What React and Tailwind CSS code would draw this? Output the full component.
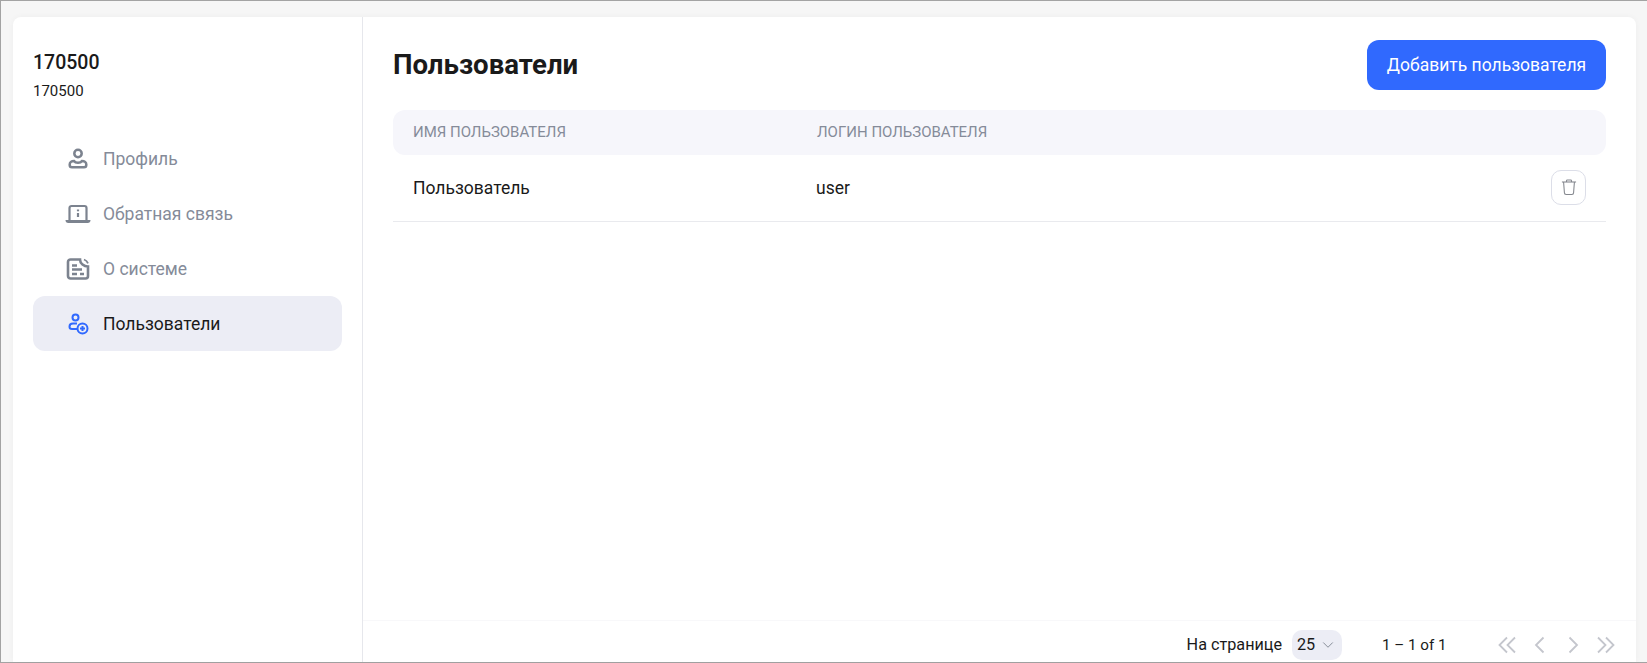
import { ChevronDown } from "lucide-react";

function ProfileIcon() {
  return (
    <svg viewBox="0 0 24 24" className="w-6 h-6" fill="none" stroke="currentColor" strokeWidth="2.500">
      <circle cx="12" cy="6.500" r="3.700" />
      <path d="M8 14c-2.500 0-4.300 1.500-4.300 3.500v.4c0 1.400 1 2.300 2.300 2.300h12c1.300 0 2.300-.9 2.300-2.300v-.4c0-2-1.800-3.500-4.300-3.500-.8 1.200-2.200 1.800-4 1.800s-3.200-.6-4-1.800z" />
    </svg>
  );
}

function LaptopIcon() {
  return (
    <svg viewBox="0 0 24 24" className="w-6 h-6 overflow-visible" fill="none" stroke="currentColor" strokeWidth="2.200">
      <path d="M3.500 18V6A2 2 0 0 1 5.500 4h13a2 2 0 0 1 2 2v12" />
      <path d="M-.5 18h25c0 1.700-1 3-2.800 3H2.300C.5 21-.5 19.700-.5 18z" fill="currentColor" stroke="none" />
      <path d="M12 11v4" />
      <path d="M12 7.500v1.800" />
    </svg>
  );
}

function DocIcon() {
  return (
    <svg viewBox="0 0 24 24" className="w-6 h-6" fill="none" stroke="currentColor" strokeWidth="2.600">
      <path d="M14 2.500H4.500a2.500 2.500 0 0 0-2.500 2.500v14a2.500 2.500 0 0 0 2.500 2.500h15a2.500 2.500 0 0 0 2.500-2.500V9.500c-4 0-8-3-8-7z" />
      <path d="M18 2.500c1.800.6 3.300 2 4 3.800" strokeWidth="1.800" />
      <path d="M6 8.500h5M6 12.500h10M6 17h5M14 17h4" strokeWidth="2.300" />
    </svg>
  );
}

function UsersAddIcon() {
  return (
    <svg viewBox="0 0 24 24" className="w-6 h-6" fill="none" stroke="currentColor" strokeWidth="2">
      <circle cx="9.500" cy="5.500" r="3" />
      <path d="M11 11.500H7c-2 0-3.500 1.300-3.500 3.200 0 1.500 1 2.300 2.500 2.300h5" />
      <circle cx="16.500" cy="16.500" r="5" />
      <path d="M16.500 14v5M14 16.500h5" />
    </svg>
  );
}

function TrashIcon() {
  return (
    <svg viewBox="0 0 24 24" className="w-5 h-5" fill="none" stroke="currentColor" strokeWidth="1.300">
      <path d="M3.500 6h17" />
      <path d="M9 6V4.500a1 1 0 0 1 1-1h4a1 1 0 0 1 1 1V6" />
      <path d="M5.500 6l1 13a2 2 0 0 0 2 2h7a2 2 0 0 0 2-2l1-13" />
    </svg>
  );
}

function PageArrow({ d }) {
  return (
    <svg viewBox="0 0 24 24" className="w-6 h-6 text-[#c4c6cd]" fill="none" stroke="currentColor" strokeWidth="1.800">
      <path d={d} />
    </svg>
  );
}

const menu = [
  { label: "Профиль", icon: ProfileIcon },
  { label: "Обратная связь", icon: LaptopIcon },
  { label: "О системе", icon: DocIcon },
  { label: "Пользователи", icon: UsersAddIcon, active: true },
];

function Sidebar() {
  return (
    <aside className="w-[350px] shrink-0 border-r border-[#e6e7ec] px-[20px] pt-[34px]">
      <div className="text-[19.500px] leading-[24px] font-medium text-[#1a1a1a]">170500</div>
      <div className="mt-[6px] text-[15px] leading-[20px] text-[#1a1a1a]">170500</div>
      <nav className="mt-[30px] flex flex-col">
        {menu.map((item) => {
          const Icon = item.icon;
          return (
            <div
              key={item.label}
              className={`h-[55px] flex items-center pl-[33px] gap-[13px] rounded-[12px] text-[17.500px] ${
                item.active ? "bg-[#ecedf5] text-[#1a1a1a]" : "text-[#858b99]"
              }`}
            >
              <span className={item.active ? "text-[#3069fe]" : "text-[#7c838f]"}>
                <Icon />
              </span>
              <span className="pt-[2px]">{item.label}</span>
            </div>
          );
        })}
      </nav>
    </aside>
  );
}

function UsersTable() {
  return (
    <div className="mt-[20px]">
      <div className="h-[45px] flex items-center rounded-[12px] bg-[#f6f6fb] px-[20px] text-[15px] text-[#858b99] uppercase">
        <div className="w-[404px]">Имя пользователя</div>
        <div>Логин пользователя</div>
      </div>
      <div className="h-[67px] flex items-center border-b border-[#e9eaee] px-[20px] text-[17.500px] text-[#1a1a1a]">
        <div className="w-[403px]">Пользователь</div>
        <div className="flex-1">user</div>
        <button className="mb-[2px] w-[35px] h-[35px] flex items-center justify-center rounded-[10px] border border-[#dcdee8] text-[#85888f]">
          <TrashIcon />
        </button>
      </div>
    </div>
  );
}

function Pagination() {
  return (
    <div className="h-[42px] shrink-0 flex items-start justify-end border-t border-[#f8f8fa] pt-[9px] pr-[18px] text-[16.200px] leading-[30px] text-[#1a1a1a]">
      <span className="whitespace-nowrap">На странице</span>
      <div className="ml-[10px] h-[30px] w-[50px] flex items-center justify-center gap-[4px] rounded-[10px] bg-[#ecedf5]">
        25
        <ChevronDown className="w-[18px] h-[18px] text-[#7c838f]" strokeWidth={1.200} />
      </div>
      <span className="ml-[40px] w-[113px] whitespace-nowrap text-[15.200px]">1 – 1 of 1</span>
      <div className="flex items-center gap-[9px] h-[30px]">
        <PageArrow d="M12 4.500 4.500 12 12 19.500M20 4.500 12.500 12l7.500 7.500" />
        <PageArrow d="M15.500 4.500 8 12l7.500 7.500" />
        <PageArrow d="M8.500 4.500 16 12l-7.500 7.500" />
        <PageArrow d="M4 4.500 11.500 12 4 19.500M12 4.500 19.500 12 12 19.500" />
      </div>
    </div>
  );
}

export default function App() {
  return (
    <div
      className="h-[663px] flex flex-col bg-[#f6f6f6] border-l border-t border-b border-[#a3a3a3] pl-[12px] pr-[11px] pt-[16px]"
      style={{ fontFamily: "Roboto, sans-serif" }}
    >
      <div className="flex-1 flex min-h-0 bg-white rounded-t-[8px] shadow-[0_0_6px_rgba(0,0,0,0.04)]">
        <Sidebar />
        <main className="flex-1 min-w-0 flex flex-col">
          <div className="flex-1 px-[30px] pt-[23px]">
            <div className="flex items-center justify-between">
              <h1 className="text-[27.600px] font-bold text-[#1a1a1a]">Пользователи</h1>
              <button className="h-[50px] w-[239px] rounded-[12px] bg-[#3069fe] text-white text-[17.500px]">
                Добавить пользователя
              </button>
            </div>
            <UsersTable />
          </div>
          <Pagination />
        </main>
      </div>
    </div>
  );
}
